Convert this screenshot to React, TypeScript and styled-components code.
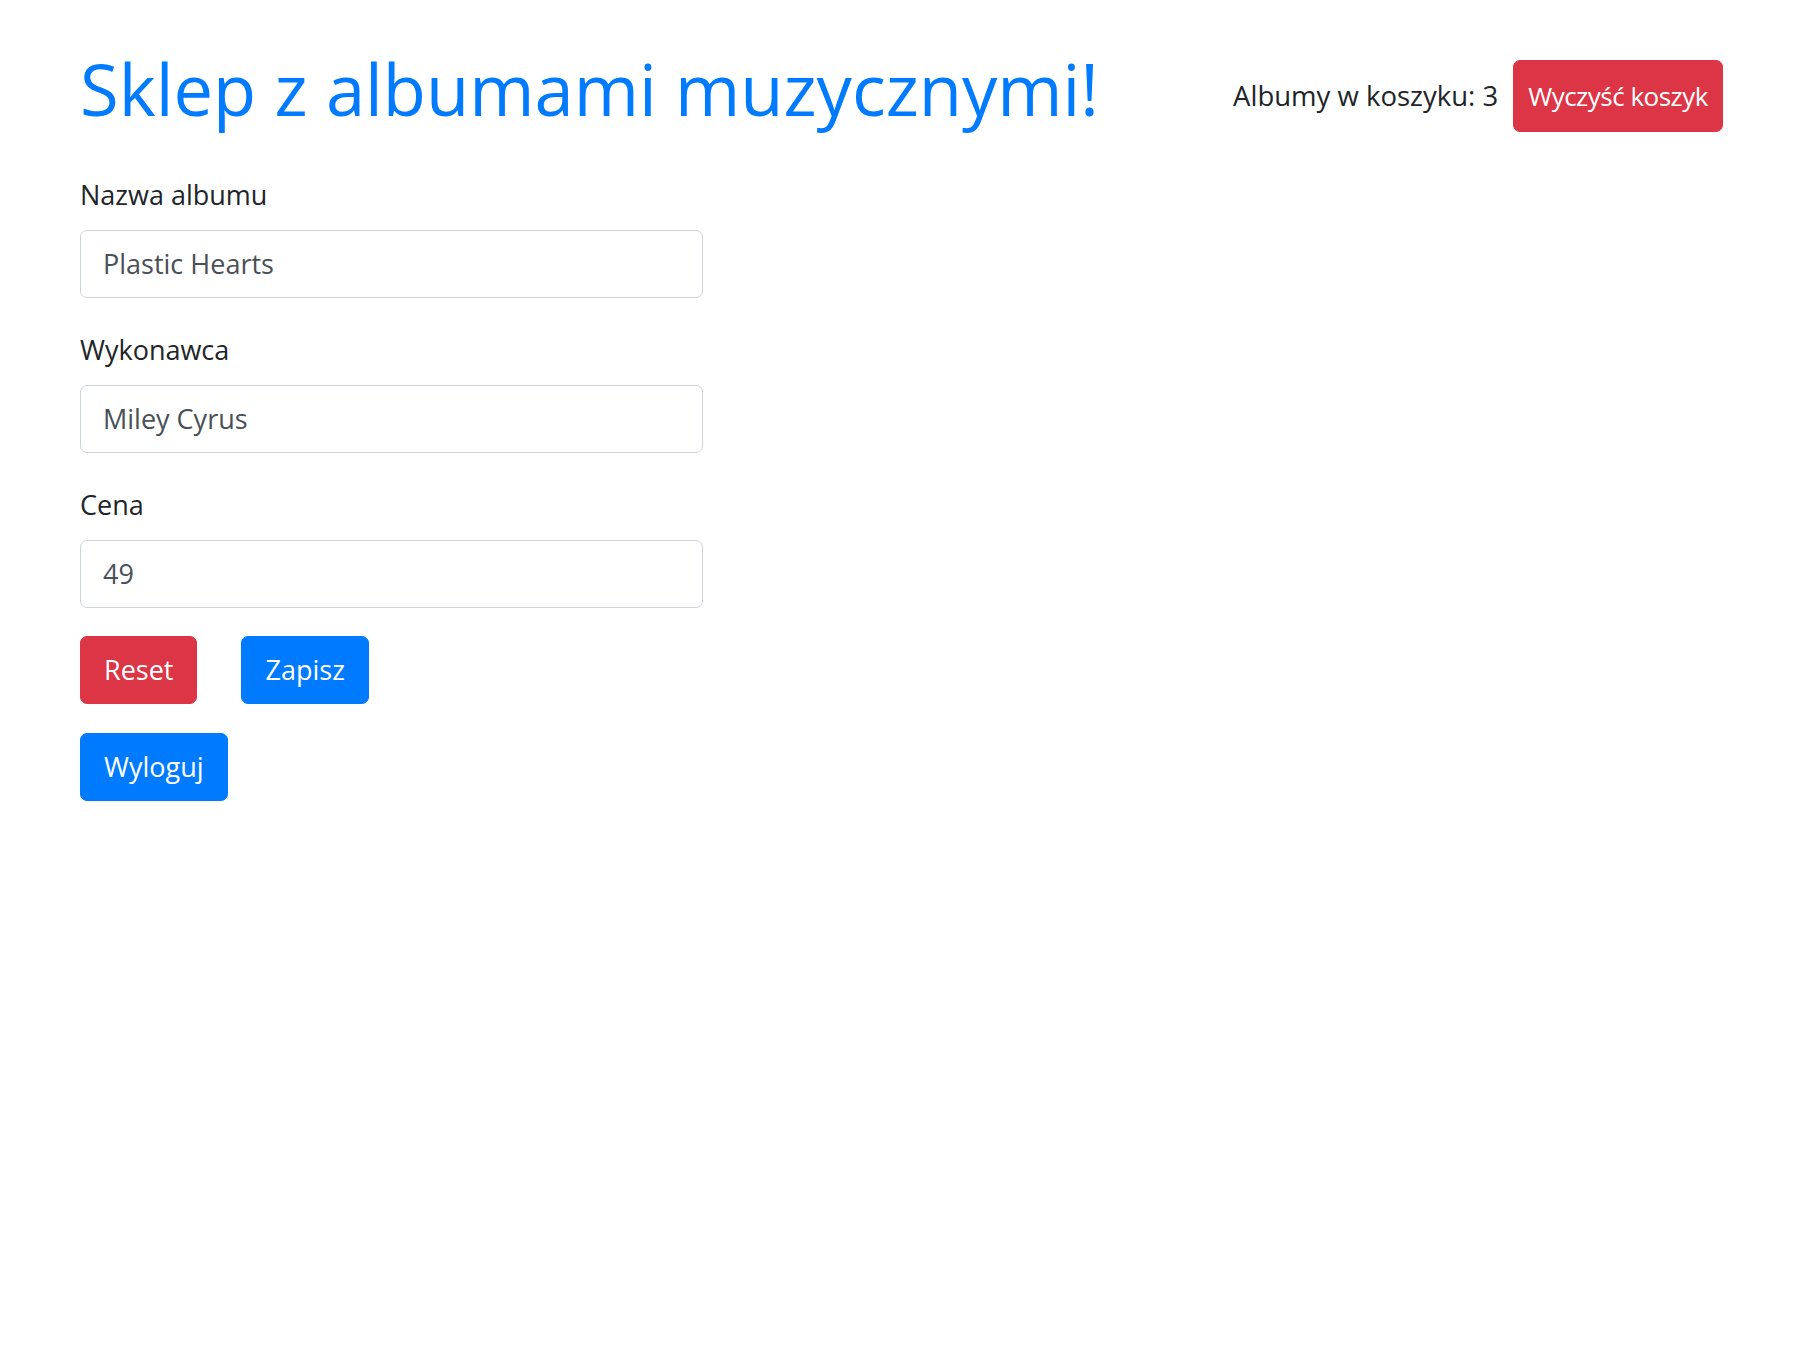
import React from "react";
import styled, { createGlobalStyle } from "styled-components";

const GlobalStyle = createGlobalStyle`
  html, body {
    margin: 0;
    padding: 0;
    background: #ffffff;
  }
  body {
    font-family: "Open Sans", "Noto Sans", "Liberation Sans", sans-serif;
    color: #212529;
  }
  * { box-sizing: border-box; }
`;

const Page = styled.div`
  padding: 47px 97px 0 80px;
`;

const Header = styled.header`
  display: flex;
  align-items: center;
  justify-content: space-between;
`;

const Title = styled.h1`
  margin: 0 0 14px 0;
  font-size: 70.5px;
  line-height: 1.2;
  font-weight: 500;
  color: #007bff;
`;

const Cart = styled.div`
  display: flex;
  align-items: center;
  gap: 15px;
`;

const CartCount = styled.span`
  font-size: 27.5px;
  line-height: 42px;
  color: #212529;
`;

const Button = styled.button<{ $variant: "danger" | "primary"; $compact?: boolean }>`
  font-family: inherit;
  font-size: ${(p) => (p.$compact ? "26px" : "27px")};
  letter-spacing: ${(p) => (p.$compact ? "-0.5px" : "0")};
  line-height: 42px;
  font-weight: 400;
  color: #ffffff;
  background: ${(p) => (p.$variant === "danger" ? "#dc3545" : "#007bff")};
  border: 1px solid ${(p) => (p.$variant === "danger" ? "#dc3545" : "#007bff")};
  border-radius: 7px;
  padding: ${(p) => (p.$compact ? "14px 14px" : "12px 23px")};
  cursor: pointer;
`;

const Form = styled.form`
  width: 623px;
  margin-top: 28px;
  display: flex;
  flex-direction: column;
  gap: 31px;
`;

const Group = styled.div`
  display: flex;
  flex-direction: column;
`;

const Label = styled.label`
  font-size: 27px;
  line-height: 42px;
  margin-bottom: 14px;
  color: #212529;
`;

const Input = styled.input`
  font-family: inherit;
  font-size: 27px;
  line-height: 42px;
  height: 68px;
  padding: 12px 22px;
  color: #495057;
  background: #ffffff;
  border: 1px solid #ced4da;
  border-radius: 7px;
  width: 100%;
  outline: none;
`;

const ButtonRow = styled.div`
  display: flex;
  gap: 44px;
  margin-top: 28px;
`;

const LogoutRow = styled.div`
  display: flex;
  margin-top: 29px;
`;

export default function App() {
  return (
    <>
      <GlobalStyle />
      <Page>
        <Header>
          <Title>Sklep z albumami muzycznymi!</Title>
          <Cart>
            <CartCount>Albumy w koszyku: 3</CartCount>
            <Button $variant="danger" $compact type="button">
              Wyczyść koszyk
            </Button>
          </Cart>
        </Header>
        <Form onSubmit={(e) => e.preventDefault()}>
          <Group>
            <Label htmlFor="name">Nazwa albumu</Label>
            <Input id="name" defaultValue="Plastic Hearts" />
          </Group>
          <Group>
            <Label htmlFor="artist">Wykonawca</Label>
            <Input id="artist" defaultValue="Miley Cyrus" />
          </Group>
          <Group>
            <Label htmlFor="price">Cena</Label>
            <Input id="price" defaultValue="49" />
          </Group>
        </Form>
        <ButtonRow>
          <Button $variant="danger" type="button">Reset</Button>
          <Button $variant="primary" type="button">Zapisz</Button>
        </ButtonRow>
        <LogoutRow>
          <Button $variant="primary" type="button">Wyloguj</Button>
        </LogoutRow>
      </Page>
    </>
  );
}
